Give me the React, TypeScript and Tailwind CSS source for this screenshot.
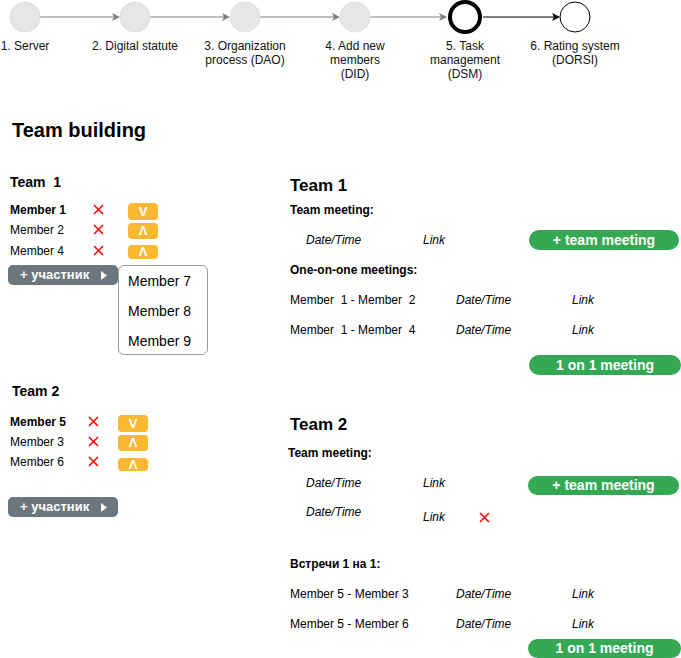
const font = { fontFamily: '"Liberation Sans", Arial, sans-serif' };

const steps = [
  ["1. Server"],
  ["2. Digital statute"],
  ["3. Organization", "process (DAO)"],
  ["4. Add new", "members", "(DID)"],
  ["5. Task", "management", "(DSM)"],
  ["6. Rating system", "(DORSI)"],
];

const Stepper = () => {
  const centers = [25, 135, 245, 355, 465, 575];
  return (
    <div>
      <svg width="681" height="34" className="block">
        {centers.slice(0, 5).map((cx, i) => {
          const dark = i === 4;
          const color = dark ? "#000000" : "#808080";
          const x1 = cx + (i === 4 ? 18 : 15);
          const tip = centers[i + 1] - (i === 3 ? 18 : 15);
          return (
            <g key={i}>
              <line x1={x1} y1="17" x2={tip - 6} y2="17" stroke={color} strokeWidth="1" />
              <path d={`M${tip} 17 L${tip - 8} 13 L${tip - 6} 17 L${tip - 8} 21 Z`} fill={color} />
            </g>
          );
        })}
        {centers.slice(0, 4).map((cx) => (
          <circle key={cx} cx={cx} cy="17" r="15" fill="#e6e6e6" stroke="#dedede" strokeWidth="1" />
        ))}
        <circle cx="465" cy="17" r="15" fill="#ffffff" stroke="#000000" strokeWidth="4" />
        <circle cx="575" cy="17" r="15" fill="#ffffff" stroke="#000000" strokeWidth="1" />
      </svg>
      <div className="flex ml-[-30px] mt-[5px] h-[42px] text-[12px] leading-[14px] text-[#111111]">
        {steps.map((lines, i) => (
          <div key={i} className="w-[110px] shrink-0 text-center">
            {lines.map((l) => (
              <div key={l}>{l}</div>
            ))}
          </div>
        ))}
      </div>
    </div>
  );
};

const Cross = ({ className = "" }: { className?: string }) => (
  <svg width="11" height="11" viewBox="0 0 11 11" className={className}>
    <path d="M1 1 L10 10 M10 1 L1 10" stroke="#ff0000" strokeWidth="1.5" />
  </svg>
);

const Arrow = ({ label, cls }: { label: string; cls: string }) => (
  <div
    className={`w-[30px] rounded-[4px] bg-[#fbb832] text-white font-bold text-[13px] flex items-center justify-center ${cls}`}
  >
    {label}
  </div>
);

type Member = { name: string; bold?: boolean; arrow: string; row: string; btn: string };

const MemberRow = ({ m, crossX, btnX }: { m: Member; crossX: string; btnX: string }) => (
  <div className={`flex items-start h-5 ${m.row}`}>
    <div className={`h-5 leading-5 text-[12px] pl-[10px] ${crossX} ${m.bold ? "font-bold" : ""}`}>{m.name}</div>
    <Cross className="mt-[4px] shrink-0" />
    <div className={btnX}>
      <Arrow label={m.arrow} cls={m.btn} />
    </div>
  </div>
);

const AddButton = ({ cls }: { cls: string }) => (
  <div
    className={`ml-[8px] w-[110px] h-5 rounded-[5px] bg-[#6c767d] text-white font-bold text-[13px] flex items-center pl-[12px] ${cls}`}
  >
    <span>+ участник</span>
    <svg width="6" height="9" viewBox="0 0 6 9" className="ml-[12px]">
      <path d="M0 0 L6 4.5 L0 9 Z" fill="#ffffff" />
    </svg>
  </div>
);

const GreenButton = ({ label, cls }: { label: string; cls: string }) => (
  <div
    className={`rounded-[10px] bg-[#34a853] text-white font-bold text-[14px] flex items-center justify-center ${cls}`}
  >
    {label}
  </div>
);

const team1: Member[] = [
  { name: "Member 1", bold: true, arrow: "V", row: "", btn: "mt-[3px] h-[17px]" },
  { name: "Member 2", arrow: "Λ", row: "", btn: "mt-[3px] h-[16px]" },
  { name: "Member 4", arrow: "Λ", row: "mt-[1px]", btn: "mt-[4px] h-[14px]" },
];

const team2: Member[] = [
  { name: "Member 5", bold: true, arrow: "V", row: "", btn: "mt-[3px] h-[17px]" },
  { name: "Member 3", arrow: "Λ", row: "", btn: "mt-[3px] h-[16px]" },
  { name: "Member 6", arrow: "Λ", row: "", btn: "mt-[6px] h-[13px]" },
];

const LeftColumn = () => (
  <div className="w-[280px] shrink-0">
    <div className="h-[24px] leading-[24px] pl-[10px] text-[14px] font-bold whitespace-pre">Team  1</div>
    <div className="mt-[6px]">
      {team1.map((m) => (
        <MemberRow key={m.name} m={m} crossX="w-[93px]" btnX="ml-[24px]" />
      ))}
    </div>
    <div className="relative mt-[4px]">
      <AddButton cls="" />
      <div className="absolute left-[118px] top-0 w-[90px] h-[90px] bg-white border border-[#9a9a9a] rounded-[6px] text-[14px]">
        {["Member 7", "Member 8", "Member 9"].map((n) => (
          <div key={n} className="h-[30px] leading-[30px] pl-[9px]">
            {n}
          </div>
        ))}
      </div>
    </div>
    <div className="mt-[95px] h-[22px] leading-[22px] pl-[12px] text-[14px] font-bold">Team 2</div>
    <div className="mt-[10px]">
      {team2.map((m) => (
        <MemberRow key={m.name} m={m} crossX="w-[88px]" btnX="ml-[19px]" />
      ))}
    </div>
    <AddButton cls="mt-[25px]" />
  </div>
);

const MeetingRow = ({ who }: { who: string }) => (
  <div className="flex h-5 leading-5 text-[12px] pl-[10px]">
    <div className="w-[166px] whitespace-pre">{who}</div>
    <div className="w-[116px] italic">Date/Time</div>
    <div className="italic">Link</div>
  </div>
);

const RightColumn = () => (
  <div className="w-[401px] shrink-0">
    <div className="h-[32px] leading-[32px] pl-[10px] text-[17px] font-bold">Team 1</div>
    <div className="h-[16px] leading-[16px] pl-[10px] text-[12px] font-bold">Team meeting:</div>
    <div className="mt-[12px] flex h-5 leading-5 text-[12px] italic">
      <div className="w-[26px]" />
      <div className="w-[117px]">Date/Time</div>
      <div className="w-[106px]">Link</div>
      <GreenButton label="+ team meeting" cls="w-[150px] h-5 not-italic" />
    </div>
    <div className="mt-[12px] h-[16px] leading-[16px] pl-[10px] text-[12px] font-bold">One-on-one meetings:</div>
    <div className="mt-[12px]">
      <MeetingRow who="Member  1 - Member  2" />
    </div>
    <div className="mt-[10px]">
      <MeetingRow who="Member  1 - Member  4" />
    </div>
    <div className="mt-[15px] flex">
      <GreenButton label="1 on 1 meeting" cls="ml-[249px] w-[152px] h-5" />
    </div>

    <div className="mt-[38px] h-[24px] leading-[24px] pl-[10px] text-[17px] font-bold">Team 2</div>
    <div className="mt-[8px] h-[16px] leading-[16px] pl-[8px] text-[12px] font-bold">Team meeting:</div>
    <div className="mt-[13px] flex items-start text-[12px] italic">
      <div className="w-[26px]" />
      <div className="w-[117px] leading-[18px]">Date/Time</div>
      <div className="w-[105px] leading-[18px]">Link</div>
      <GreenButton label="+ team meeting" cls="mt-[2px] w-[151px] h-[19px] not-italic" />
    </div>
    <div className="mt-[8px] flex items-start text-[12px] italic">
      <div className="w-[26px]" />
      <div className="w-[117px] leading-[18px]">Date/Time</div>
      <div className="w-[56px] mt-[5px] leading-[18px]">Link</div>
      <Cross className="mt-[9px]" />
    </div>
    <div className="mt-[30px] h-[16px] leading-[16px] pl-[10px] text-[12px] font-bold">Встречи 1 на 1:</div>
    <div className="mt-[12px]">
      <MeetingRow who="Member 5 - Member 3" />
    </div>
    <div className="mt-[10px]">
      <MeetingRow who="Member 5 - Member 6" />
    </div>
    <div className="mt-[5px] flex">
      <GreenButton label="1 on 1 meeting" cls="ml-[248px] w-[153px] h-[19px]" />
    </div>
  </div>
);

export default function App() {
  return (
    <div className="w-[681px] h-[658px] bg-white text-black overflow-hidden" style={font}>
      <Stepper />
      <div className="mt-[37px] h-[24px] leading-[24px] pl-[12px] text-[20px] font-bold">Team building</div>
      <div className="mt-[28px] flex">
        <LeftColumn />
        <RightColumn />
      </div>
    </div>
  );
}
